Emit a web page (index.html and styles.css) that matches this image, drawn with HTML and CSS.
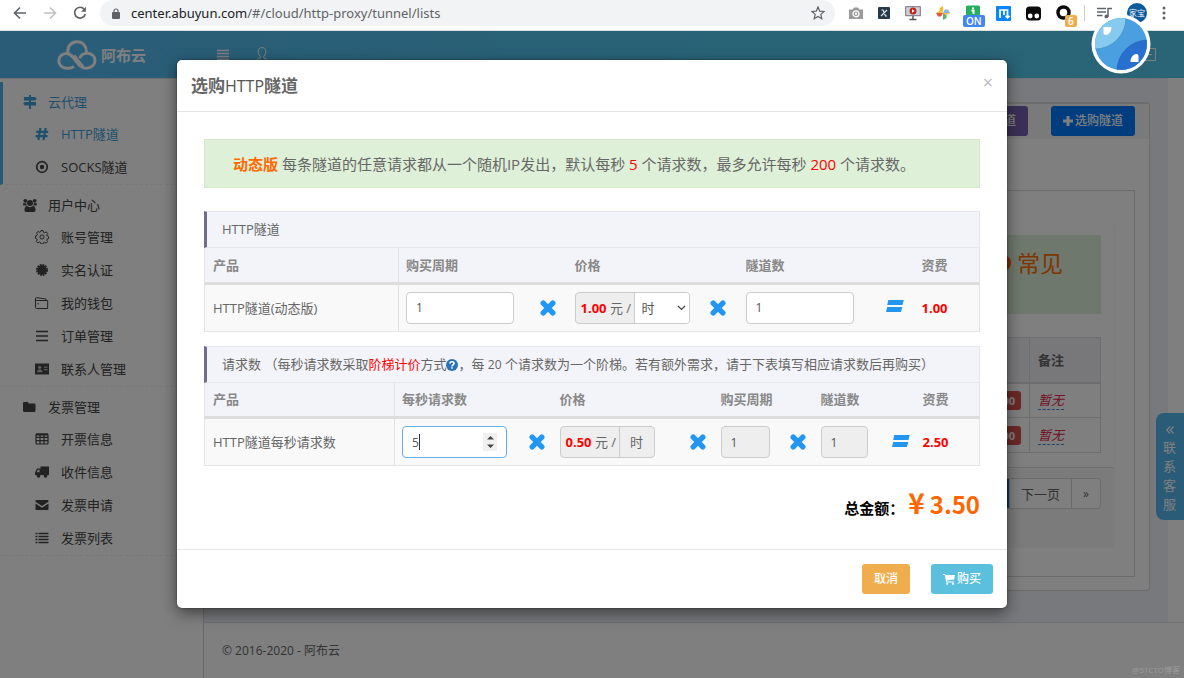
FILE: index.html
```html
<!DOCTYPE html>
<html lang="zh-CN">
<head>
<meta charset="utf-8">
<title>HTTP隧道</title>
<link rel="stylesheet" href="styles.css">
</head>
<body>
<svg class="sprite" aria-hidden="true">
  <symbol id="times" viewBox="0 0 16 16"><path d="M3.200 3.200l9.600 9.600M12.800 3.200l-9.600 9.600" stroke="currentColor" stroke-width="5.400" stroke-linecap="round"/></symbol>
  <symbol id="equals" viewBox="0 0 18 12"><path d="M2.300 0h15.500l-1.400 5H1.200zM1.200 7h15.100l-1.400 5H0z" fill="currentColor"/></symbol>
  <symbol id="bars" viewBox="0 0 12 12"><path d="M0 1.500h12M0 4.500h12M0 7.500h12M0 10.500h12" stroke="currentColor" stroke-width="1.400"/></symbol>
</svg>

<div class="browser">
  <div class="nav">
    <button class="tool" aria-label="后退"><svg width="14" height="14" viewBox="0 0 14 14" fill="none" stroke="#5f6368" stroke-width="1.600"><path d="M13 7H2M7 1.500L1.500 7 7 12.500"/></svg></button>
    <button class="tool" aria-label="前进"><svg width="14" height="14" viewBox="0 0 14 14" fill="none" stroke="#bfc1c4" stroke-width="1.600"><path d="M1 7h11M7 1.500L12.500 7 7 12.500"/></svg></button>
    <button class="tool" aria-label="刷新"><svg width="14" height="14" viewBox="0 0 14 14" fill="none" stroke="#5f6368" stroke-width="1.700"><path d="M11.200 3.200A5.400 5.400 0 1 0 12.300 8"/><path d="M12.900.8v5H8z" fill="#5f6368" stroke="none"/></svg></button>
  </div>
  <div class="omnibox">
    <svg width="8" height="11" viewBox="0 0 8 11"><rect y="4" width="8" height="7" rx="1" fill="#5f6368"/><path d="M2 5V3a2 2 0 0 1 4 0v2" fill="none" stroke="#5f6368" stroke-width="1.200"/></svg>
    <span class="url"><span class="host">center.abuyun.com</span>/#/cloud/http-proxy/tunnel/lists</span>
    <button class="tool" aria-label="收藏"><svg width="14" height="14" viewBox="0 0 14 14" fill="none" stroke="#5f6368" stroke-width="1.200"><path d="M7 1l1.700 4.100 4.400.4-3.300 2.900 1 4.300L7 10.400l-3.800 2.300 1-4.300L.9 5.500l4.400-.4z"/></svg></button>
  </div>
  <div class="extensions">
    <svg width="14" height="14" viewBox="0 0 14 14"><path d="M0 3.500h3.500L5 1.500h4l1.500 2H14V13H0z" fill="#9a9a9a"/><circle cx="7" cy="7.800" r="3" fill="none" stroke="#fff" stroke-width="1.200"/><circle cx="7" cy="7.800" r="1.200" fill="#fff"/></svg>
    <svg width="12" height="12" viewBox="0 0 12 12"><rect width="12" height="12" rx="1" fill="#283a48"/><path d="M3.500 3h1.500l2.500 6H9M9 3L3 9" stroke="#dfe8ee" stroke-width="1.200" fill="none"/></svg>
    <svg width="16" height="16" viewBox="0 0 16 16"><rect x=".7" y="1.700" width="14.600" height="9" fill="#c9d1da" stroke="#7f7180"/><circle cx="8" cy="6" r="3.500" fill="#c0271a"/><path d="M7 4.300L9.700 6 7 7.700z" fill="#fff"/><path d="M8 11v3M4.500 14.500h7" stroke="#555" stroke-width="1.500"/></svg>
    <svg width="14" height="14" viewBox="0 0 14 14"><path d="M7 7V0L3.500 2v3z" fill="#f3bd2f"/><path d="M7 7h7l-2-3.500H9z" fill="#8daef0"/><path d="M7 7v7l3.500-2V9z" fill="#55b66b"/><path d="M7 7H0l2 3.500h3z" fill="#e55548"/><path d="M7 7H0l3.500-2zM7 7h7l-3.500 2z" fill="#f3bd2f"/></svg>
    <span class="ext"><svg width="16" height="16" viewBox="0 0 16 16"><path d="M1 2a1.500 1.500 0 0 1 1.500-1.500h11A1.500 1.500 0 0 1 15 2v14H1z" fill="#27ae60"/><path d="M6.500 5.500H8.500V9M8 2.500v1.500" stroke="#fff" stroke-width="2" fill="none"/></svg><b class="badge on">ON</b></span>
    <svg width="15" height="15" viewBox="0 0 15 15"><rect width="15" height="15" rx="1" fill="#0a84ff"/><path d="M4 12V4h7.500v7M8 4v5M9.500 9.800l2 2 2-2" stroke="#fff" stroke-width="1.700" fill="none"/></svg>
    <svg width="15" height="15" viewBox="0 0 15 15"><rect width="15" height="14" y=".5" rx="3.500" fill="#0b0b0b"/><circle cx="4.200" cy="10" r="2.400" fill="#fff"/><circle cx="10.800" cy="10" r="2.400" fill="#fff"/></svg>
    <span class="ext"><svg width="16" height="16" viewBox="0 0 16 16"><circle cx="7.500" cy="7.500" r="5.500" fill="none" stroke="#0b0b0b" stroke-width="3.500"/></svg><b class="badge count">6</b></span>
    <i class="divider"></i>
    <svg width="15" height="12" viewBox="0 0 15 12"><path d="M0 1.500h9M0 5h9M0 8.500h5.500" stroke="#5f6368" stroke-width="1.500"/><circle cx="9.500" cy="9.500" r="2" fill="#5f6368"/><path d="M11 9.500V1.500h4" stroke="#5f6368" stroke-width="1.500" fill="none"/></svg>
    <span class="avatar">家宝</span>
    <svg width="4" height="14" viewBox="0 0 4 14" fill="#5f6368"><circle cx="2" cy="2" r="1.500"/><circle cx="2" cy="7" r="1.500"/><circle cx="2" cy="12" r="1.500"/></svg>
  </div>
</div>

<div class="page">
  <header class="topbar">
    <a class="logo" href="#"><svg width="40" height="30" viewBox="0 0 40 30" fill="none" stroke="#fff" stroke-width="3"><path d="M11 13.500C10 6 14.500 1.800 20 1.800c6 0 9.500 4.500 9.500 10.200"/><path d="M17 26.500C14.500 28.300 12 28.500 9 28.200 4.500 27.500 1.800 24.500 1.800 20.800c0-4.200 3.200-7.300 7.200-7.300 5.500 0 7.500 4.500 10.500 8.500 2.500 3.500 5 6.200 9.500 6.200 5.500 0 9-3.400 9-7.700 0-4.500-3.500-7.300-8-7.300-3.700 0-6.200 1.800-7.200 5M17 15.500l9 11.500"/></svg><span>阿布云</span></a>
    <button class="top-icon" aria-label="菜单"><svg width="12" height="12"><use href="#bars"/></svg></button>
    <button class="top-icon" aria-label="用户"><svg width="14" height="16" viewBox="0 0 14 16" fill="none" stroke="#fff" stroke-width="1"><path d="M5.200 9.500C3.500 7.500 3 5.500 3.200 3.800 3.500 1.500 5 .6 7 .6s3.500.9 3.800 3.200c.2 1.700-.3 3.700-2 5.700v1.500c2.500 1 4.700 1.500 4.700 4.300H.5c0-2.800 2.200-3.300 4.700-4.300z"/></svg></button>
    <button class="top-icon exit" aria-label="退出"><svg width="13" height="13" viewBox="0 0 13 13" fill="none" stroke="#fff"><path d="M1 .5h11.500v12H1M5 6.500h4"/></svg></button>
  </header>

  <div class="layout">
    <nav class="sidebar">
      <section class="group active">
        <h2><svg viewBox="0 0 14 14" fill="currentColor"><path d="M6 0h2v14H6z"/><path d="M1 2h11l2 1.700-2 1.800H1zM13 7H2L0 8.700l2 1.800h11z"/></svg>云代理</h2>
        <a class="current" href="#"><svg viewBox="0 0 14 14" fill="none" stroke="currentColor" stroke-width="2.200"><path d="M5.500 1L3.300 13M10.700 1L8.500 13M1.200 4.800h12M.6 9.200h12"/></svg>HTTP隧道</a>
        <a href="#"><svg viewBox="0 0 14 14"><circle cx="7" cy="7" r="5.300" fill="none" stroke="currentColor" stroke-width="1.700"/><circle cx="7" cy="7" r="2.200" fill="currentColor"/></svg>SOCKS隧道</a>
      </section>
      <section class="group">
        <h2><svg viewBox="0 0 14 14" fill="currentColor"><circle cx="7" cy="5" r="3"/><circle cx="2.300" cy="2.800" r="1.900"/><circle cx="11.700" cy="2.800" r="1.900"/><path d="M3 14c-1 0-1.500-.7-1.500-2 0-2.300.9-4 2.500-4 1.900 1.500 4.100 1.500 6 0 1.600 0 2.500 1.700 2.500 4 0 1.300-.5 2-1.500 2zM0 5.200h3.300c0 1 .2 1.600.5 2.300H1C.3 7.500 0 7 0 5.200zM14 5.200h-3.300c0 1-.2 1.600-.5 2.300H13c.7 0 1-.5 1-2.300z"/></svg>用户中心</h2>
        <a href="#"><svg viewBox="0 0 14 14" fill="none" stroke="currentColor"><circle cx="7" cy="7" r="2.100"/><path d="M5.900.6h2.200l.4 1.700 1.200.5 1.500-.9 1.500 1.500-.9 1.500.5 1.200 1.400.3v2.200l-1.500.4-.5 1.200.9 1.500-1.500 1.500-1.500-.9-1.200.5-.3 1.200H5.900l-.4-1.500-1.200-.5-1.500.9-1.500-1.500.9-1.500-.5-1.200-1.200-.3V6l1.500-.4.500-1.200-.9-1.500 1.500-1.500 1.500.9 1-.4z"/></svg>账号管理</a>
        <a href="#"><svg viewBox="0 0 14 14"><circle cx="7" cy="7" r="4.700" fill="currentColor"/><circle cx="7" cy="7" r="5" fill="none" stroke="currentColor" stroke-width="2" stroke-dasharray="1.800 .8"/></svg>实名认证</a>
        <a href="#"><svg viewBox="0 0 14 14" fill="none" stroke="currentColor"><path d="M.5 2.500v9c0 .6.400 1 1 1h11.200V4.500H2C1 4.500.5 4 .5 3s.5-1.500 1.500-1.300l9 1.300v1.500"/><path d="M3 7v1.500"/></svg>我的钱包</a>
        <a href="#"><svg viewBox="0 0 14 14"><path d="M1 2.500h12M1 7h12M1 11.500h12" stroke="currentColor" stroke-width="1.700"/></svg>订单管理</a>
        <a href="#"><svg viewBox="0 0 14 14"><path d="M0 1.500h14v11H0z" fill="currentColor"/><circle cx="4.700" cy="5.300" r="1.600" fill="#bbb"/><path d="M2 10.300c0-4 5.500-4 5.500 0zM9 4.500h3.500v1.200H9zM9 7h3.500v1.200H9z" fill="#bbb"/></svg>联系人管理</a>
      </section>
      <section class="group">
        <h2><svg viewBox="0 0 14 14" fill="currentColor"><path d="M0 3.200C0 2.400.6 2 1.200 2h3.300c.7 0 1 .6 1.100 1.500h5.700c.8 0 1.200.5 1.200 1.200v6.100c0 .8-.5 1.200-1.200 1.200H1.200C.5 12 0 11.500 0 10.800z"/></svg>发票管理</h2>
        <a href="#"><svg viewBox="0 0 14 14" fill="none" stroke="currentColor" stroke-width="1.200"><rect x="1" y="2" width="12" height="10" rx="1"/><path d="M1 5.300h12M1 8.600h12M5 2v10M9 2v10" /><path d="M1 2.500h12" stroke-width="2"/></svg>开票信息</a>
        <a href="#"><svg viewBox="0 0 14 14" fill="currentColor"><path fill-rule="evenodd" d="M5.500 1.500H14V10H6.500 0V7.500l2-4h3.500zM2.800 4.700L1.700 7.200h2.700V4.700z"/><circle cx="3.500" cy="10.800" r="1.900"/><circle cx="10.500" cy="10.800" r="1.900"/></svg>收件信息</a>
        <a href="#"><svg viewBox="0 0 14 14" fill="currentColor"><path d="M.5 3c0-.6.400-1 1-1h11c.6 0 1 .4 1 1v.8L7 8 .5 3.800zM.5 5.500L7 9.700l6.500-4.200V11c0 .6-.4 1-1 1h-11c-.6 0-1-.4-1-1z"/></svg>发票申请</a>
        <a href="#"><svg viewBox="0 0 14 14"><path d="M.5 2.500h2M.5 5.500h2M.5 8.500h2M.5 11.500h2M3.500 2.500h10M3.500 5.500h10M3.500 8.500h10M3.500 11.500h10" stroke="currentColor" stroke-width="1.600"/></svg>发票列表</a>
      </section>
    </nav>

    <div class="content">
      <main class="main">
        <div class="panel">
          <div class="panel-head">
            <button class="btn purple">续费隧道</button>
            <button class="btn blue"><svg width="10" height="10" viewBox="0 0 10 10"><path d="M5 0v10M0 5h10" stroke="#fff" stroke-width="3"/></svg>选购隧道</button>
          </div>
          <div class="panel-body">
            <div class="box">
              <div class="listing">
                <div class="tips"><i class="dot"></i>常见</div>
                <table class="tunnels">
                  <thead><tr><th></th><th class="note">备注</th></tr></thead>
                  <tbody>
                    <tr><td><span class="tag">1.00</span></td><td><a class="editable" href="#">暂无</a></td></tr>
                    <tr><td><span class="tag">1.00</span></td><td><a class="editable" href="#">暂无</a></td></tr>
                  </tbody>
                </table>
                <div class="pager">
                  <a class="on" href="#">1</a><a class="next" href="#">下一页</a><a class="last" href="#">»</a>
                </div>
              </div>
            </div>
          </div>
        </div>
      </main>
      <footer class="footer">© 2016-2020 - 阿布云</footer>
    </div>
  </div>

  <aside class="service"><svg width="8" height="8" viewBox="0 0 8 8" fill="none" stroke="#fff" stroke-width="1.200"><path d="M4 .5L.8 4 4 7.500M7.500.5L4.300 4l3.200 3.500"/></svg>联系客服</aside>

  <div class="backdrop">
    <section class="modal" role="dialog" aria-labelledby="dialog-title">
      <div class="modal-head">
        <h1 id="dialog-title">选购<span class="latin">HTTP</span>隧道</h1>
        <button class="close" aria-label="关闭">×</button>
      </div>
      <div class="modal-body">
        <p class="alert"><strong>动态版</strong> 每条隧道的任意请求都从一个随机IP发出，默认每秒 <em>5</em> 个请求数，最多允许每秒 <em>200</em> 个请求数。</p>

        <div class="order">
          <h3>HTTP隧道</h3>
          <table class="order-table">
            <colgroup><col><col class="w129"><col class="w40"><col class="w130"><col class="w41"><col class="w136"><col class="w40"><col class="w65"></colgroup>
            <thead><tr><th>产品</th><th>购买周期</th><th></th><th>价格</th><th></th><th>隧道数</th><th></th><th>资费</th></tr></thead>
            <tbody><tr>
              <td>HTTP隧道(动态版)</td>
              <td><input class="field w108" type="text" value="1" aria-label="购买周期"></td>
              <td class="op"><svg width="16" height="16"><use href="#times"/></svg></td>
              <td><div class="price"><span class="amount"><b>1.00</b> 元 /</span><span class="pick"><select aria-label="计费单位"><option>时</option></select><svg width="9" height="6" viewBox="0 0 9 6"><path d="M1 1l3.500 3.500L8 1" fill="none" stroke="#444" stroke-width="1.200"/></svg></span></div></td>
              <td class="op"><svg width="16" height="16"><use href="#times"/></svg></td>
              <td><input class="field w108" type="text" value="1" aria-label="隧道数"></td>
              <td class="op equal"><svg width="18" height="12"><use href="#equals"/></svg></td>
              <td class="fee">1.00</td>
            </tr></tbody>
          </table>
        </div>

        <div class="order">
          <h3>请求数 （每秒请求数采取<em>阶梯计价</em>方式<svg class="help" width="12" height="12" viewBox="0 0 12 12"><circle cx="6" cy="6" r="6" fill="#2a72b5"/><path d="M4 4.600C4 2.200 8 2.200 8 4.500 8 6 6 5.800 6 7.400M6 8.300v1.500" fill="none" stroke="#fff" stroke-width="1.600"/></svg>，每 <span class="step">20</span> 个请求数为一个阶梯。若有额外需求，请于下表填写相应请求数后再购买）</h3>
          <table class="order-table">
            <colgroup><col><col class="w126"><col class="w32"><col class="w129"><col class="w32"><col class="w68"><col class="w32"><col class="w72"><col class="w30"><col class="w64"></colgroup>
            <thead><tr><th>产品</th><th>每秒请求数</th><th></th><th>价格</th><th></th><th>购买周期</th><th></th><th>隧道数</th><th></th><th>资费</th></tr></thead>
            <tbody><tr>
              <td>HTTP隧道每秒请求数</td>
              <td><div class="field stepper"><input type="text" value="5" aria-label="每秒请求数"><i class="caret"></i><span class="spin"><svg width="7" height="12" viewBox="0 0 7 12" fill="#444"><path d="M3.500 0L7 3.500H0zM3.500 12L0 8.500h7z"/></svg></span></div></td>
              <td class="op"><svg width="16" height="16"><use href="#times"/></svg></td>
              <td><div class="price"><span class="amount"><b>0.50</b> 元 /</span><span class="unit">时</span></div></td>
              <td class="op"><svg width="16" height="16"><use href="#times"/></svg></td>
              <td><input class="field w49" type="text" value="1" disabled aria-label="购买周期"></td>
              <td class="op"><svg width="16" height="16"><use href="#times"/></svg></td>
              <td><input class="field w47" type="text" value="1" disabled aria-label="隧道数"></td>
              <td class="op equal"><svg width="18" height="12"><use href="#equals"/></svg></td>
              <td class="fee">2.50</td>
            </tr></tbody>
          </table>
        </div>

        <div class="total"><span>总金额：</span><strong><span class="yen">¥</span>3.50</strong></div>
      </div>
      <div class="modal-foot">
        <button class="btn orange">取消</button>
        <button class="btn sky"><svg width="12" height="11" viewBox="0 0 12 11" fill="#fff"><path d="M0 0h2.300l.4 1H12l-.8 4.600L4 6.500l.2 1H11v1H3.300L1.700 1H0z"/><circle cx="4.200" cy="9.800" r="1.100"/><circle cx="10" cy="9.800" r="1.100"/></svg>购买</button>
      </div>
    </section>
  </div>
  <span class="watermark">@51CTO博客</span>
</div>

<div class="floater">
  <svg viewBox="0 0 60 60"><defs><clipPath id="ball"><circle cx="30" cy="30" r="26"/></clipPath></defs><circle cx="30" cy="30" r="29.500" fill="#fff"/><g clip-path="url(#ball)"><path d="M0 0h60v60H0z" fill="#4a9fe0"/><circle cx="4" cy="4" r="31" fill="#86cbef" stroke="#3b86c4" stroke-width=".6"/><circle cx="57" cy="57" r="31" fill="#2870d0" stroke="#2560b0" stroke-width=".6"/></g><path d="M12.500 13h8c0 5-3 8-6 8-1.500 0-2-1-2-2.500zM47.500 48h-8c0-5 3-8 6-8 1.500 0 2 1 2 2.500z" fill="#fff"/></svg>
</div>
</body>
</html>
```
FILE: styles.css
```css
* { box-sizing: border-box; }
body {
  margin: 0;
  min-height: 100vh;
  display: flex;
  flex-direction: column;
  position: relative;
  font: 13px/20px "Open Sans", "Noto Sans CJK SC", sans-serif;
  color: #666;
  background: #fff;
}
h1, h2, h3, p { margin: 0; font-weight: 400; }
button { font: inherit; cursor: pointer; }
a { color: inherit; text-decoration: none; }
em { font-style: normal; color: #f00; }
svg { flex: none; }
.sprite { position: absolute; width: 0; height: 0; }

/* browser bar */
.browser { display: flex; align-items: center; height: 31px; padding: 0 18px 4px 12px; border-bottom: 1px solid #dcdee0; }
.tool { display: flex; padding: 0; border: 0; background: none; }
.nav { display: flex; gap: 16px; padding-right: 13px; padding-left: 1px; }
.omnibox { flex: 1; display: flex; align-items: center; gap: 11px; height: 26px; padding: 0 10px 0 12px; border-radius: 13px; background: #f1f3f4; }
.url { flex: 1; font-family: "Noto Sans", "Open Sans", sans-serif; color: #5f6368; }
.host { color: #202124; }
.extensions { display: flex; align-items: center; gap: 15px; padding-left: 14px; }
.ext { position: relative; display: flex; }
.badge { position: absolute; padding: 0 3px; border-radius: 2px; color: #fff; font: 600 10px/12px "Open Sans", sans-serif; }
.on.badge { left: -2px; top: 10px; background: #4285f4; }
.count { left: 9px; top: 10px; background: #f0ad4e; }
.divider { width: 1px; height: 16px; margin: 0 -3px; background: #ccc; }
.avatar { width: 20px; height: 20px; border-radius: 10px; background: #0b5a9c; color: #fff; font-size: 8px; text-align: center; }

/* page */
.page { flex: 1; position: relative; display: flex; flex-direction: column; border-bottom: 1px solid #333; }
.topbar { display: flex; align-items: center; gap: 26px; height: 47px; padding: 0 28px 0 57px; background: linear-gradient(90deg, #54b8f0, #52c6ec 60%, #52c8ee); }
.logo { display: flex; align-items: center; gap: 4px; width: 134px; color: #fff; font-size: 15px; font-weight: 700; }
.top-icon { display: flex; padding: 0; border: 0; background: none; color: #fff; }
.exit { margin-left: auto; }
.layout { flex: 1; display: flex; }
.sidebar { width: 204px; padding-top: 3px; border-right: 1px solid #d6d6d6; border-top: 1px solid #ddd; color: #444; }
.group { padding: 5px 0 1px; border-bottom: 1px dashed #f0f0f0; border-left: 3px solid transparent; }
.group.active { border-left-color: #4db3e8; }
.group h2 { display: flex; align-items: center; gap: 11px; height: 30px; padding-left: 20px; font-size: 13px; }
.group a { display: flex; align-items: center; gap: 12px; height: 33px; padding-left: 32px; }
.group svg { width: 14px; height: 14px; }
.active h2, .current { color: #3fa0d6; }
.content { flex: 1; display: flex; flex-direction: column; }
.main { margin-right: 16px; padding: 23px 18px 31px; border-top: 1px solid #e4e7ec; background: #f0f3f8; }
.panel { border: 1px solid #d8d8d8; border-top-width: 2px; border-radius: 4px; background: #fff; }
.panel-head { display: flex; justify-content: flex-end; gap: 23px; padding: 2px 14px 3px; background: #f4f4f4; }
.btn { display: flex; align-items: center; gap: 2px; height: 30px; padding: 0 12px; border: 0; border-radius: 3px; color: #fff; font-size: 12px; font-weight: 500; }
.purple { background: #7460b0; }
.blue { background: #007bff; }
.panel-body { padding: 51px 14px 13px; }
.box { padding: 33px 19px 28px; border: 1px solid #d4d6d9; }
.listing { border: 1px solid #f6f6f6; border-top-color: transparent; border-radius: 4px; padding-top: 10px; }
.tips { display: flex; align-items: center; justify-content: flex-end; gap: 6px; height: 79px; margin: 0 13px 23px; padding: 0 38px 24px 0; background: #dff0d8; color: #ff6a00; font-size: 23px; }
.dot { width: 16px; height: 16px; border-radius: 8px; background: #ff5a10; }
.tunnels { width: calc(100% - 27px); margin: 0 13px 14px 14px; border-collapse: collapse; }
.tunnels th, .tunnels td { height: 35px; padding: 0 8px; border: 1px solid #d9dbde; text-align: right; }
.tunnels thead th { height: 45px; border-bottom-width: 2px; background: #f0f1f5; }
.tunnels .note, .tunnels td + td { width: 71px; text-align: left; }
.tag { padding: 2px 6px; border-radius: 3px; background: #d9534f; color: #fff; font-size: 11px; font-weight: 700; }
.editable { color: #e0294a; font-style: italic; border-bottom: 1px dashed #428bca; }
.pager { display: flex; justify-content: flex-end; align-items: flex-start; height: 80px; padding: 10px 13px 0; border-top: 1px solid #ddd; background: #f6f6f6; }
.pager a { display: grid; place-items: center; height: 31px; border: 1px solid #d6d6d6; border-left: 0; background: #fff; }
.pager .on { width: 30px; background: #1671c4; color: #fff; }
.pager .next { width: 62px; }
.pager .last { width: 29px; border-radius: 0 4px 4px 0; font-size: 12px; }
.footer { flex: 1; padding: 18px; border-top: 1px solid #dde0e5; color: #666; font-size: 12px; }
.service { position: absolute; right: 0; top: 382px; display: flex; flex-direction: column; align-items: center; gap: 4px; width: 28px; height: 107px; padding: 13px 7px 0; border-radius: 8px 0 0 8px; background: #54b8f0; color: #fff; line-height: 19px; }
.watermark { position: absolute; right: 4px; bottom: 1px; color: #9b9b9b; font-size: 8px; line-height: 16px; }
.floater { position: absolute; right: 33px; top: 14px; width: 60px; height: 60px; }

/* dialog */
.backdrop { position: absolute; inset: 0; display: flex; justify-content: center; align-items: flex-start; padding-top: 29px; background: rgba(0, 0, 0, .5); }
.modal { width: 830px; border-radius: 5px; background: #fff; box-shadow: 0 5px 15px rgba(0, 0, 0, .5), 0 0 2px rgba(0, 0, 0, .5); }
.modal-head { display: flex; align-items: center; justify-content: space-between; height: 52px; padding: 0 14px; border-bottom: 1px solid #e5e5e5; }
.modal-head h1 { font-size: 17px; font-weight: 700; color: #666; }
.latin { font-size: 16px; font-weight: 500; color: #555; }
.close { padding: 0; border: 0; background: none; color: #bbb; font-size: 18px; line-height: 18px; margin-top: -8px; }
.modal-body { padding: 27px 27px 21px; }
.alert { height: 49px; margin-bottom: 23px; padding: 0 28px; border: 1px solid #d6e9c6; background: #dff0d8; font-size: 15px; line-height: 48px; }
.alert strong { color: #ff6a00; }
.order { margin-bottom: 14px; }
.order h3 { height: 37px; padding-left: 15px; border: 1px solid #e6e7ee; border-left: 3px solid #706e8c; background: #f3f4f9; font-size: 13px; line-height: 34px; }
.help { vertical-align: -2px; }
.step { font-size: 12px; }
.order-table { width: 100%; table-layout: fixed; border-collapse: collapse; border: 1px solid #e4e4e4; border-top: 0; background: #f9f9f9; }
.order-table th, .order-table td { padding: 0 7px; text-align: left; }
.order-table th { height: 35px; border-bottom: 3px solid #ddd; background: #f3f4f9; color: #888; font-weight: 700; }
.order-table td { height: 48px; }
.order-table th:first-child, .order-table td:first-child { padding-left: 8px; border-right: 1px solid #e2e2e2; }
.order-table .op { padding: 0; text-align: center; color: #2196f3; }
.op svg { display: block; margin: 0 auto; }
.order-table .equal { padding-bottom: 3px; }
.order-table .fee { color: #f00; font-weight: 700; }
.w30 { width: 30px; }
.w32 { width: 32px; }
.w40 { width: 40px; }
.w41 { width: 41px; }
.w47 { width: 47px; }
.w49 { width: 49px; }
.w64 { width: 64px; }
.w65 { width: 65px; }
.w68 { width: 68px; }
.w72 { width: 72px; }
.w108 { width: 108px; }
.w126 { width: 126px; }
.w129 { width: 129px; }
.w130 { width: 130px; }
.w136 { width: 136px; }
.field { display: block; height: 32px; padding: 0 9px; border: 1px solid #ccc; border-radius: 4px; background: #fff; color: #555; font: 12px "Open Sans", sans-serif; }
.field:disabled { background: #eee; }
.stepper { display: flex; align-items: center; width: 105px; border-color: #66afe9; }
.stepper input { width: 1ch; padding: 0; border: 0; outline: 0; color: inherit; font: inherit; }
.caret { width: 1px; height: 16px; background: #333; }
.spin { display: grid; place-items: center; width: 14px; height: 18px; margin-left: auto; background: #f0f0f0; }
.price { display: inline-flex; height: 32px; border: 1px solid #ccc; border-radius: 4px; background: #eee; line-height: 30px; vertical-align: middle; overflow: hidden; }
.amount { width: 58px; padding-left: 5px; white-space: nowrap; }
.amount b { color: #f00; }
.unit { width: 35px; border-left: 1px solid #ccc; text-align: center; }
.pick { position: relative; width: 55px; border-left: 1px solid #ccc; background: #fff; }
.pick select { width: 100%; height: 100%; padding: 0 7px; border: 0; background: none; appearance: none; color: #555; font: inherit; display: block; }
.pick svg { position: absolute; right: 3px; top: 12px; pointer-events: none; }
.total { display: flex; justify-content: flex-end; align-items: baseline; gap: 4px; padding-top: 2px; color: #000; font: 700 15px/40px "Noto Sans CJK SC", sans-serif; }
.total strong { color: #ff6600; font-size: 24px; font-weight: 700; }
.yen { margin-right: 5px; font-size: 28px; }
.modal-foot { display: flex; justify-content: flex-end; gap: 21px; padding: 14px; border-top: 1px solid #e5e5e5; }
.orange { background: #f0ad4e; }
.sky { background: #5bc0de; }
```
